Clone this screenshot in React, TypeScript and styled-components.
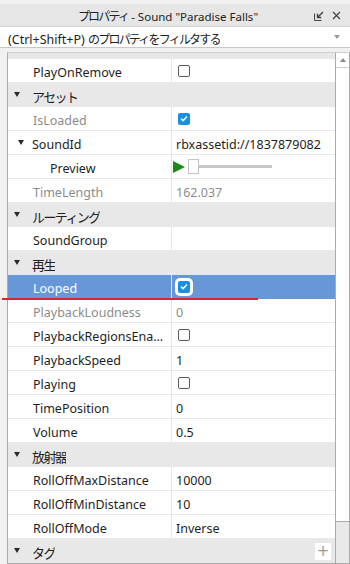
import React from "react";
import styled, { createGlobalStyle } from "styled-components";

const GlobalStyle = createGlobalStyle`
  html, body { margin: 0; padding: 0; background: #f1f1f1; }
  body { font-family: "Noto Sans", "Noto Sans CJK JP", sans-serif; }
  * { box-sizing: border-box; }
`;

const FONT = `"Noto Sans", "Noto Sans CJK JP", sans-serif`;

const Panel = styled.div`
  position: relative;
  width: 350px;
  height: 564px;
  display: flex;
  flex-direction: column;
  background: #f1f1f1;
  overflow: hidden;
  font-family: ${FONT};
`;

const Jp = styled.span<{ $ls?: number; $size?: number }>`
  font-family: "Noto Sans CJK JP", sans-serif;
  font-size: ${(p) => p.$size ?? 12}px;
  letter-spacing: ${(p) => p.$ls ?? -1.8}px;
`;

const TitleBar = styled.div`
  margin-top: 4px;
  height: 24px;
  background: #e6e6e6;
  display: flex;
  align-items: center;
  padding-top: 1px;
`;

const Title = styled.div`
  flex: 1;
  padding-left: 22px;
  text-align: center;
  font-size: 11.5px;
  color: #222;
  white-space: nowrap;
`;

const TitleIcons = styled.div`
  width: 36px;
  display: flex;
  align-items: center;
  gap: 8px;
`;

const FilterBox = styled.div`
  height: 23px;
  background: #fff;
  border-top: 1px solid #d4d4d4;
  border-bottom: 1px solid #c8c8c8;
  display: flex;
  align-items: center;
  padding: 0 8px;
  font-size: 12.5px;
  color: #222;
`;

const FilterText = styled.div`
  flex: 1;
  white-space: nowrap;
  position: relative;
  top: 2px;
`;

const DropArrow = styled.div`
  width: 0;
  height: 0;
  border-left: 3.5px solid transparent;
  border-right: 3.5px solid transparent;
  border-top: 4px solid #9a9a9a;
  margin-right: 2px;
`;

const ListFrame = styled.div`
  margin-top: 4px;
  margin-left: 7px;
  flex: 1;
  display: flex;
  border-left: 1px solid #ababab;
  border-right: 1px solid #ababab;
  border-top: 1px solid #cfcfcf;
  border-bottom: 1px solid #ababab;
  background: #fff;
`;

const Rows = styled.div`
  flex: 1;
  display: flex;
  flex-direction: column;
  overflow: hidden;
`;

const TopStrip = styled.div`
  height: 6px;
  flex: none;
  background: #e8e8e8;
`;

const Row = styled.div<{ $cat?: boolean; $sel?: boolean }>`
  height: 24px;
  flex: none;
  display: flex;
  background: ${(p) => (p.$sel ? "#6897d9" : p.$cat ? "#e8e8e8" : "#fff")};
  border-bottom: 1px solid ${(p) => (p.$cat ? "#e8e8e8" : p.$sel ? "#6897d9" : "#e9e9e9")};
  font-size: 12.5px;
  color: ${(p) => (p.$sel ? "#fff" : "#1e1e1e")};
`;

const NameCell = styled.div<{ $indent: number; $dim?: boolean; $cat?: boolean }>`
  width: ${(p) => (p.$cat ? "auto" : "164px")};
  flex: none;
  display: flex;
  align-items: center;
  padding-left: ${(p) => p.$indent}px;
  padding-top: 4px;
  border-right: ${(p) => (p.$cat ? "none" : "1px solid #e6e6e6")};
  color: ${(p) => (p.$dim ? "#8c8c8c" : "inherit")};
  white-space: nowrap;
  overflow: hidden;
`;

const ValueCell = styled.div<{ $dim?: boolean }>`
  flex: 1;
  display: flex;
  align-items: center;
  padding-left: 4px;
  padding-top: 4px;
  color: ${(p) => (p.$dim ? "#8c8c8c" : "inherit")};
  white-space: nowrap;
  overflow: hidden;
`;

const Caret = styled.span<{ $left: number }>`
  flex: none;
  width: 0;
  height: 0;
  margin-top: -5px;
  margin-left: ${(p) => p.$left}px;
  margin-right: ${(p) => 18 - p.$left}px;
  border-left: 3.5px solid transparent;
  border-right: 3.5px solid transparent;
  border-top: 5px solid #2a2a2a;
`;

const Box = styled.span<{ $checked?: boolean; $framed?: boolean }>`
  width: 12px;
  height: 12px;
  margin-left: 2px;
  margin-top: -4px;
  border-radius: 2px;
  display: inline-flex;
  align-items: center;
  justify-content: center;
  background: ${(p) => (p.$checked ? "#1a8fe3" : "#fff")};
  border: ${(p) => (p.$checked ? "none" : "1px solid #5c5c5c")};
  box-shadow: ${(p) => (p.$framed ? "0 0 0 3px #fff" : "none")};
`;

const PlayTri = styled.span`
  width: 0;
  height: 0;
  margin-left: -3px;
  margin-top: -4px;
  border-top: 6.5px solid transparent;
  border-bottom: 6.5px solid transparent;
  border-left: 12px solid #178a17;
`;

const SliderThumb = styled.span`
  width: 11px;
  height: 15px;
  margin-left: 3px;
  margin-top: -4px;
  background: #fff;
  border: 1px solid #c4c4c4;
`;

const SliderTrack = styled.span`
  width: 73px;
  height: 3px;
  margin-top: -4px;
  background: #c6c6c6;
`;

const Scrollbar = styled.div`
  width: 14px;
  flex: none;
  display: flex;
  flex-direction: column;
  border-left: 1px solid #ababab;
  background: #e9e9e9;
`;

const ScrollBtn = styled.div`
  height: 15px;
  background: #fff;
  border-bottom: 1px solid #d0d0d0;
  display: flex;
  align-items: center;
  justify-content: center;
`;

const UpArrow = styled.span`
  width: 0;
  height: 0;
  border-left: 3.5px solid transparent;
  border-right: 3.5px solid transparent;
  border-bottom: 4px solid #8a8a8a;
`;

const ScrollThumb = styled.div`
  height: 454px;
  background: #fff;
  border-bottom: 1px solid #ababab;
`;

const AddBtn = styled.span`
  margin-left: auto;
  margin-right: 4px;
  margin-top: 1px;
  align-self: center;
  width: 16px;
  height: 17px;
  background: #fff;
  display: flex;
  align-items: center;
  justify-content: center;
  color: #9a9a9a;
  font-size: 15px;
  font-family: "DejaVu Sans", sans-serif;
  line-height: 1;
`;

const Annotation = styled.div`
  position: absolute;
  left: 2px;
  top: 298px;
  width: 256px;
  height: 2px;
  background: #d9262a;
`;

const Check = () => (
  <svg width="8" height="7" viewBox="0 0 8 7">
    <path d="M1 3.6 L3.1 5.6 L7 1.4" fill="none" stroke="#fff" strokeWidth="1.5" />
  </svg>
);

type Item =
  | { t: "cat"; name: string; add?: boolean }
  | {
      t: "prop";
      name: string;
      dim?: boolean;
      indent?: number;
      caret?: boolean;
      value?: React.ReactNode;
      vdim?: boolean;
      sel?: boolean;
    };

const items: Item[] = [
  { t: "prop", name: "PlayOnRemove", value: <Box /> },
  { t: "cat", name: "アセット" },
  { t: "prop", name: "IsLoaded", dim: true, value: <Box $checked><Check /></Box> },
  { t: "prop", name: "SoundId", caret: true, value: "rbxassetid://1837879082" },
  {
    t: "prop",
    name: "Preview",
    indent: 42,
    value: (
      <>
        <PlayTri />
        <SliderThumb />
        <SliderTrack />
      </>
    ),
  },
  { t: "prop", name: "TimeLength", dim: true, value: "162.037", vdim: true },
  { t: "cat", name: "ルーティング" },
  { t: "prop", name: "SoundGroup", value: "" },
  { t: "cat", name: "再生" },
  { t: "prop", name: "Looped", sel: true, value: <Box $checked $framed><Check /></Box> },
  { t: "prop", name: "PlaybackLoudness", dim: true, value: "0", vdim: true },
  { t: "prop", name: "PlaybackRegionsEna…", value: <Box /> },
  { t: "prop", name: "PlaybackSpeed", value: "1" },
  { t: "prop", name: "Playing", value: <Box /> },
  { t: "prop", name: "TimePosition", value: "0" },
  { t: "prop", name: "Volume", value: "0.5" },
  { t: "cat", name: "放射器" },
  { t: "prop", name: "RollOffMaxDistance", value: "10000" },
  { t: "prop", name: "RollOffMinDistance", value: "10" },
  { t: "prop", name: "RollOffMode", value: "Inverse" },
  { t: "cat", name: "タグ", add: true },
];

export default function App() {
  return (
    <Panel>
      <GlobalStyle />
      <TitleBar>
        <Title>
          <Jp>プロパティ</Jp> - Sound "Paradise Falls"
        </Title>
        <TitleIcons>
          <svg width="10" height="10" viewBox="0 0 10 10">
            <path d="M0.5 2.5 V9.5 H7.5" fill="none" stroke="#444" strokeWidth="1" />
            <path d="M9 1 L4 6 M3.5 2.8 V6.5 H7.2" fill="none" stroke="#444" strokeWidth="1.4" />
          </svg>
          <svg width="9" height="9" viewBox="0 0 9 9">
            <path d="M1 1 L8 8 M8 1 L1 8" stroke="#444" strokeWidth="1.2" />
          </svg>
        </TitleIcons>
      </TitleBar>
      <FilterBox>
        <FilterText>
          (Ctrl+Shift+P) <Jp>のプロパティをフィルタする</Jp>
        </FilterText>
        <DropArrow />
      </FilterBox>
      <ListFrame>
        <Rows>
          <TopStrip />
          {items.map((it, i) =>
            it.t === "cat" ? (
              <Row key={i} $cat>
                <NameCell $indent={0} $cat>
                  <Caret $left={6} />
                  <Jp $ls={-1.6} $size={13}>{it.name}</Jp>
                </NameCell>
                {it.add && <AddBtn>+</AddBtn>}
              </Row>
            ) : (
              <Row key={i} $sel={it.sel}>
                <NameCell $indent={it.caret ? 0 : it.indent ?? 25} $dim={it.dim}>
                  {it.caret && <Caret $left={10} />}
                  {it.name}
                </NameCell>
                <ValueCell $dim={it.vdim}>{it.value}</ValueCell>
              </Row>
            )
          )}
        </Rows>
        <Scrollbar>
          <ScrollBtn>
            <UpArrow />
          </ScrollBtn>
          <ScrollThumb />
        </Scrollbar>
      </ListFrame>
      <Annotation />
    </Panel>
  );
}
